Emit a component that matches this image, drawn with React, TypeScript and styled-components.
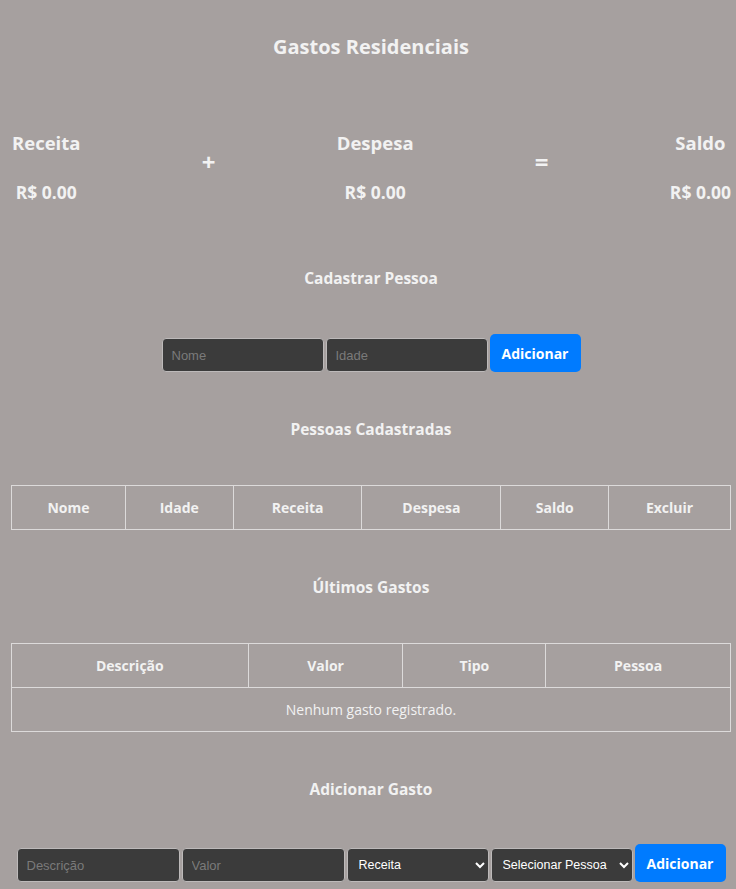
import React from "react";
import styled, { createGlobalStyle } from "styled-components";

const Global = createGlobalStyle`
  html, body {
    margin: 0;
    padding: 0;
    background: #a6a09f;
  }
  body {
    font-family: "Open Sans", "Noto Sans", sans-serif;
    color: #f2f2f2;
  }
  * { box-sizing: border-box; }
`;

const Page = styled.div`
  display: flex;
  flex-direction: column;
  padding: 32px 5px 6px 11px;
  min-height: 889px;
`;

const Title = styled.h1`
  margin: 0;
  font-size: 20px;
  line-height: 30px;
  font-weight: 700;
  text-align: center;
`;

const Summary = styled.div`
  display: flex;
  justify-content: space-between;
  align-items: center;
  margin-top: 67px;
  padding-left: 1px;
`;

const SummaryBlock = styled.div`
  display: flex;
  flex-direction: column;
  align-items: center;
  gap: 23px;
`;

const SummaryLabel = styled.div`
  font-size: 18.5px;
  line-height: 28px;
  font-weight: 700;
`;

const SummaryValue = styled.div`
  font-size: 17.5px;
  line-height: 24px;
  font-weight: 700;
`;

const Operator = styled.div`
  font-size: 24px;
  line-height: 28px;
  font-weight: 700;
  margin-top: -10px;
`;

const SectionTitle = styled.h2<{ $top: number }>`
  margin: ${(p) => p.$top}px 0 0;
  font-size: 15.5px;
  line-height: 24px;
  font-weight: 700;
  text-align: center;
`;

const FormRow = styled.div<{ $top: number }>`
  display: flex;
  justify-content: center;
  align-items: flex-end;
  gap: 2px;
  margin-top: ${(p) => p.$top}px;
`;

const fieldBase = `
  height: 34px;
  background: #3b3b3b;
  border: 1px solid #bdbaba;
  border-radius: 4px;
  color: #ffffff;
  font-family: "Liberation Sans", Arial, sans-serif;
  font-size: 13px;
  outline: none;
`;

const TextInput = styled.input<{ $w: number }>`
  ${fieldBase}
  width: ${(p) => p.$w}px;
  padding: 0 9px;
  &::placeholder {
    color: #7a7a7a;
  }
`;

const Select = styled.select`
  ${fieldBase}
  width: 142px;
  padding: 0 2px 0 7px;
  font-size: 12.5px;
`;

const Button = styled.button`
  height: 38px;
  width: 91px;
  padding: 0;
  background: #007bff;
  color: #ffffff;
  border: none;
  border-radius: 5px;
  font-family: "Open Sans", "Noto Sans", sans-serif;
  font-size: 14px;
  font-weight: 700;
  cursor: pointer;
`;

const Table = styled.table<{ $top: number }>`
  width: 100%;
  border-collapse: collapse;
  margin-top: ${(p) => p.$top}px;
`;

const Th = styled.th<{ $w: number }>`
  width: ${(p) => p.$w}px;
  height: 44px;
  padding: 0 8px;
  border: 1px solid #dcdada;
  font-size: 14px;
  font-weight: 700;
  text-align: center;
  color: #f2f2f2;
`;

const Td = styled.td`
  height: 44px;
  padding: 0 8px;
  border: 1px solid #dcdada;
  font-size: 14px;
  font-weight: 400;
  text-align: center;
  color: #f2f2f2;
`;

const pessoasCols = [
  { label: "Nome", w: 114 },
  { label: "Idade", w: 108 },
  { label: "Receita", w: 129 },
  { label: "Despesa", w: 139 },
  { label: "Saldo", w: 108 },
  { label: "Excluir", w: 122 },
];

const gastosCols = [
  { label: "Descrição", w: 237 },
  { label: "Valor", w: 155 },
  { label: "Tipo", w: 143 },
  { label: "Pessoa", w: 185 },
];

export default function App() {
  return (
    <>
      <Global />
      <Page>
        <Title>Gastos Residenciais</Title>

        <Summary>
          <SummaryBlock>
            <SummaryLabel>Receita</SummaryLabel>
            <SummaryValue>R$ 0.00</SummaryValue>
          </SummaryBlock>
          <Operator>+</Operator>
          <SummaryBlock>
            <SummaryLabel>Despesa</SummaryLabel>
            <SummaryValue>R$ 0.00</SummaryValue>
          </SummaryBlock>
          <Operator>=</Operator>
          <SummaryBlock>
            <SummaryLabel>Saldo</SummaryLabel>
            <SummaryValue>R$ 0.00</SummaryValue>
          </SummaryBlock>
        </Summary>

        <SectionTitle $top={62}>Cadastrar Pessoa</SectionTitle>
        <FormRow $top={44}>
          <TextInput $w={162} placeholder="Nome" />
          <TextInput $w={162} placeholder="Idade" />
          <Button>Adicionar</Button>
        </FormRow>

        <SectionTitle $top={45}>Pessoas Cadastradas</SectionTitle>
        <Table $top={44}>
          <thead>
            <tr>
              {pessoasCols.map((c) => (
                <Th key={c.label} $w={c.w}>
                  {c.label}
                </Th>
              ))}
            </tr>
          </thead>
        </Table>

        <SectionTitle $top={45}>Últimos Gastos</SectionTitle>
        <Table $top={44}>
          <thead>
            <tr>
              {gastosCols.map((c) => (
                <Th key={c.label} $w={c.w}>
                  {c.label}
                </Th>
              ))}
            </tr>
          </thead>
          <tbody>
            <tr>
              <Td colSpan={4}>Nenhum gasto registrado.</Td>
            </tr>
          </tbody>
        </Table>

        <SectionTitle $top={45}>Adicionar Gasto</SectionTitle>
        <FormRow $top={43}>
          <TextInput $w={163} placeholder="Descrição" />
          <TextInput $w={163} placeholder="Valor" />
          <Select defaultValue="receita">
            <option value="receita">Receita</option>
            <option value="despesa">Despesa</option>
          </Select>
          <Select defaultValue="">
            <option value="">Selecionar Pessoa</option>
          </Select>
          <Button>Adicionar</Button>
        </FormRow>
      </Page>
    </>
  );
}
